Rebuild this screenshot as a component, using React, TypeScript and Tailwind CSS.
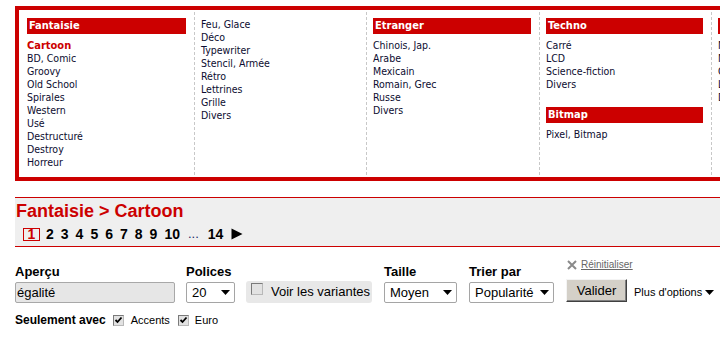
import React from "react";

const topFont = "font-['DejaVu_Sans_Condensed','DejaVu_Sans',sans-serif] font-stretch-condensed";
const arial = "font-['Liberation_Sans',Arial,sans-serif]";

function Header({ children, className = "" }: { children: React.ReactNode; className?: string }) {
  return (
    <div className={`h-[16px] bg-[#cc0000] text-white font-bold text-[11px] leading-[16px] pl-[2px] mb-[5px] whitespace-nowrap overflow-hidden ${className}`}>
      {children}
    </div>
  );
}

function Items({ items, first }: { items: string[]; first?: string }) {
  return (
    <ul className="text-[10.5px] leading-[13px] text-[#0c0c30]">
      {first && <li className="font-bold text-[#cc0000] text-[11px]">{first}</li>}
      {items.map((t) => (
        <li key={t} className="whitespace-nowrap">{t}</li>
      ))}
    </ul>
  );
}

function Arrow() {
  return (
    <svg width="9" height="5" viewBox="0 0 9 5" className="shrink-0">
      <path d="M0 0H9L4.5 5Z" fill="#000" />
    </svg>
  );
}

function Select({ value, w }: { value: string; w: string }) {
  return (
    <div className={`${w} h-[21px] bg-white border border-[#a5a5a5] rounded-[2px] flex items-center justify-between pl-[5px] pr-[4px] text-[13px] text-black`}>
      <span>{value}</span>
      <Arrow />
    </div>
  );
}

function Check({ checked, size = "w-[11px] h-[11px]" }: { checked?: boolean; size?: string }) {
  return (
    <span className={`${size} inline-flex items-center justify-center border border-t-[#7a7a7a] border-l-[#7a7a7a] border-r-[#b8b8b8] border-b-[#b8b8b8] bg-[#e2e2e2] shrink-0`}>
      {checked && (
        <svg width="9" height="9" viewBox="0 0 9 9">
          <path d="M1.5 4L3.5 6L7.5 1.5" stroke="#000" strokeWidth="1.8" fill="none" />
        </svg>
      )}
    </span>
  );
}

export default function App() {
  return (
    <div className={`w-[720px] h-[337px] overflow-hidden bg-white ${arial}`}>
      <div className="pt-[6px] pl-[15px] w-[1000px]">
        {/* Category panel */}
        <div className={`flex border-4 border-[#cc0000] py-[2px] ${topFont}`}>
          <div className="w-[176px] pl-[8px] pr-[8px] pt-[6px] pb-[6px] border-r border-dashed border-[#c8c8c8]">
            <Header>Fantaisie</Header>
            <Items
              first="Cartoon"
              items={["BD, Comic", "Groovy", "Old School", "Spirales", "Western", "Usé", "Destructuré", "Destroy", "Horreur"]}
            />
          </div>
          <div className="w-[172px] pl-[6px] pr-[8px] pt-[6px] pb-[6px] border-r border-dashed border-[#c8c8c8]">
            <Items items={["Feu, Glace", "Déco", "Typewriter", "Stencil, Armée", "Rétro", "Lettrines", "Grille", "Divers"]} />
          </div>
          <div className="w-[173px] pl-[6px] pr-[8px] pt-[6px] pb-[6px] border-r border-dashed border-[#c8c8c8]">
            <Header>Etranger</Header>
            <Items items={["Chinois, Jap.", "Arabe", "Mexicain", "Romain, Grec", "Russe", "Divers"]} />
          </div>
          <div className="w-[172px] pl-[6px] pr-[8px] pt-[6px] pb-[6px] border-r border-dashed border-[#c8c8c8]">
            <Header>Techno</Header>
            <Items items={["Carré", "LCD", "Science-fiction", "Divers"]} />
            <Header className="mt-[16px]">Bitmap</Header>
            <Items items={["Pixel, Bitmap"]} />
          </div>
          <div className="w-[172px] pl-[6px] pr-[8px] pt-[6px] pb-[6px] border-r border-dashed border-[#c8c8c8]">
            <Header>Gothique</Header>
            <Items items={["Médiéval", "Moderne", "Celtique", "Lettrines", "Divers"]} />
          </div>
        </div>

        {/* Title band */}
        <div className="mt-[16px] border-y border-[#cc0000] bg-[#efefef] pt-[3px] pb-[4px]">
          <h1 className="text-[18px] leading-[20px] font-bold text-[#cc0000] pl-[1px]">Fantaisie &gt; Cartoon</h1>
          <div className="mt-[5px] h-[16px] flex items-center pl-[8px] text-[14px] font-bold text-black leading-[16px]">
            <span className="w-[17px] h-[13px] border border-[#cc0000] text-[#cc0000] flex items-center justify-center mr-[6px]">1</span>
            <div className="flex gap-[7px] items-center">
              {["2", "3", "4", "5", "6", "7", "8", "9", "10"].map((n) => (
                <span key={n}>{n}</span>
              ))}
              <span className="font-normal text-[13px] text-[#1a2a66] ml-[1px] mr-[2px]">...</span>
              <span>14</span>
              <svg width="12" height="12" viewBox="0 0 12 12" className="ml-[1px]">
                <path d="M0.5 0.5L11.5 6L0.5 11.5Z" fill="#000" />
              </svg>
            </div>
          </div>
        </div>

        {/* Form */}
        <div className="flex items-start mt-[17px]">
          <div className="w-[160px]">
            <div className="h-[15px] leading-[15px] text-[13px] font-bold text-black">Aperçu</div>
            <div className="mt-[3px] h-[21px] bg-[#e6e6e6] border border-[#a8a8a8] rounded-[2px] flex items-center pl-[1px] text-[13px] text-black">
              égalité
            </div>
          </div>
          <div className="ml-[11px]">
            <div className="h-[15px] leading-[15px] text-[13px] font-bold text-black">Polices</div>
            <div className="mt-[3px]">
              <Select value="20" w="w-[49px]" />
            </div>
          </div>
          <div className="ml-[11px] mt-[17px]">
            <div className="w-[126px] h-[22px] bg-[#e8e8e8] rounded-[3px] flex items-start pl-[5px] pt-[2px]">
              <Check size="w-[12px] h-[12px]" />
              <span className="ml-[8px] text-[13px] leading-[15px] text-black mt-[1px] whitespace-nowrap">Voir les variantes</span>
            </div>
          </div>
          <div className="ml-[12px]">
            <div className="h-[15px] leading-[15px] text-[13px] font-bold text-black">Taille</div>
            <div className="mt-[3px]">
              <Select value="Moyen" w="w-[73px]" />
            </div>
          </div>
          <div className="ml-[12px]">
            <div className="h-[15px] leading-[15px] text-[13px] font-bold text-black">Trier par</div>
            <div className="mt-[3px]">
              <Select value="Popularité" w="w-[85px]" />
            </div>
          </div>
          <div className="ml-[12px] -mt-[6px] flex flex-col">
            <div className="h-[13px] flex items-center pl-[1px]">
              <svg width="10" height="10" viewBox="0 0 10 10">
                <path d="M1 1L9 9M9 1L1 9" stroke="#8a8a8a" strokeWidth="2" />
              </svg>
              <span className="ml-[4px] text-[10px] leading-[13px] text-[#666] underline whitespace-nowrap">Réinitialiser</span>
            </div>
            <div className="mt-[8px] flex items-center">
              <div className="w-[61px] h-[23px] bg-[#d4d0c8] border border-t-[#f4f4f4] border-l-[#f4f4f4] border-r-[#404040] border-b-[#404040] shadow-[inset_-1px_-1px_0_#808080] flex items-center justify-center text-[13px] text-black">
                Valider
              </div>
              <div className="ml-[7px] mt-[3px] flex items-center">
                <span className="text-[11px] text-black whitespace-nowrap">Plus d'options</span>
                <svg width="9" height="5" viewBox="0 0 9 5" className="ml-[3px]">
                  <path d="M0 0H9L4.5 5Z" fill="#000" />
                </svg>
              </div>
            </div>
          </div>
        </div>

        {/* Options row */}
        <div className="mt-[10px] h-[14px] flex items-center text-black">
          <span className="text-[12px] font-bold leading-[14px]">Seulement avec</span>
          <span className="ml-[7px]"><Check checked /></span>
          <span className="ml-[7px] text-[11px]">Accents</span>
          <span className="ml-[8px]"><Check checked /></span>
          <span className="ml-[6px] text-[11px]">Euro</span>
        </div>
      </div>
    </div>
  );
}
